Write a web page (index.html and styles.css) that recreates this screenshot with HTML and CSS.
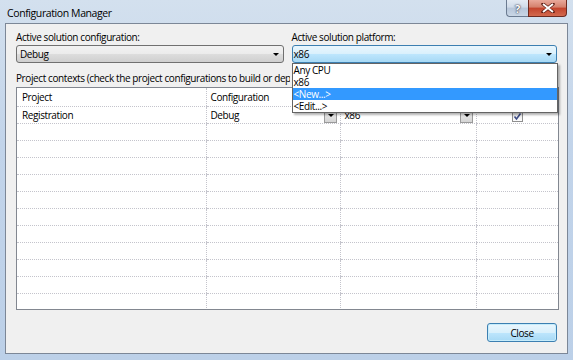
FILE: index.html
```html
<!DOCTYPE html>
<html>
<head>
<meta charset="utf-8">
<title>Configuration Manager</title>
<link rel="stylesheet" href="styles.css">
</head>
<body>
<div class="window">
  <div class="titlebar">
    <span class="title">Configuration Manager</span>
    <div class="caption">
      <span class="cap-help">?</span>
      <span class="cap-close">
        <svg width="14" height="10" viewBox="0 0 14 10"><path d="M2 1 L12 9 M12 1 L2 9" stroke="#5a1b12" stroke-width="3.4" stroke-linecap="round"/><path d="M2 1 L12 9 M12 1 L2 9" stroke="#fff" stroke-width="2"/></svg>
      </span>
    </div>
  </div>

  <div class="client">
    <div class="selectors">
      <div class="field cfg">
        <div class="label">Active solution configuration:</div>
        <div class="combo">Debug<span class="arrow"></span></div>
      </div>
      <div class="field plat">
        <div class="label">Active solution platform:</div>
        <div class="combo focused">x86<span class="arrow"></span></div>
        <ul class="dropdown">
          <li>Any CPU</li>
          <li>x86</li>
          <li class="sel">&lt;New...&gt;</li>
          <li>&lt;Edit...&gt;</li>
        </ul>
      </div>
    </div>

    <div class="label ctx">Project contexts (check the project configurations to build or deploy):</div>

    <div class="grid">
      <table>
        <colgroup><col class="c1"><col class="c2"><col class="c3"><col class="c4"></colgroup>
        <tr class="head"><td>Project</td><td>Configuration</td><td></td><td></td></tr>
        <tr>
          <td>Registration</td>
          <td><div class="cell">Debug<span class="mini"><span class="arrow"></span></span></div></td>
          <td><div class="cell">x86<span class="mini"><span class="arrow"></span></span></div></td>
          <td class="chk"><span class="box"><svg width="9" height="9" viewBox="0 0 9 9"><path d="M1.5 4.5 L3.5 7 L7.5 1.5" fill="none" stroke="#3d4c86" stroke-width="1.6"/></svg></span></td>
        </tr>
        <tr><td></td><td></td><td></td><td></td></tr>
        <tr><td></td><td></td><td></td><td></td></tr>
        <tr><td></td><td></td><td></td><td></td></tr>
        <tr><td></td><td></td><td></td><td></td></tr>
        <tr><td></td><td></td><td></td><td></td></tr>
        <tr><td></td><td></td><td></td><td></td></tr>
        <tr><td></td><td></td><td></td><td></td></tr>
        <tr><td></td><td></td><td></td><td></td></tr>
        <tr><td></td><td></td><td></td><td></td></tr>
        <tr><td></td><td></td><td></td><td></td></tr>
        <tr><td></td><td></td><td></td><td></td></tr>
      </table>
    </div>

    <div class="footer">
      <button class="btn-close">Close</button>
    </div>
  </div>
</div>
</body>
</html>
```

FILE: styles.css
```css
html, body {
  margin: 0;
  padding: 0;
  background: #c3d4e9;
  font-family: "Open Sans", "Noto Sans", sans-serif;
  font-size: 10px;
  letter-spacing: -0.4px;
  color: #000;
}
.window {
  width: 573px;
  height: 360px;
  box-sizing: border-box;
  padding: 0 5px 6px 5px;
  display: flex;
  flex-direction: column;
  background: linear-gradient(180deg, #d3e0ee 0%, #c2d4ea 40%, #bcd0e8 100%);
}
.titlebar {
  height: 23px;
  display: flex;
  align-items: flex-start;
  flex: none;
}
.title {
  padding: 6px 0 0 2px;
  line-height: 14px;
  font-size: 10.5px;
}
.caption {
  margin-left: auto;
  margin-right: 1px;
  display: flex;
}
.cap-help, .cap-close {
  height: 16px;
  border: 1px solid #6b7b91;
  border-top: none;
  display: flex;
  align-items: center;
  justify-content: center;
}
.cap-help {
  width: 21px;
  border-right: none;
  border-radius: 0 0 0 4px;
  background: linear-gradient(180deg, #e4ebf4 0%, #d0dbe9 45%, #b7c6da 50%, #c9d6e6 100%);
  color: #fff;
  font-weight: bold;
  font-size: 11px;
  text-shadow: 0 0 2px #334, 0 0 1px #223;
}
.cap-close {
  width: 37px;
  border-color: #6d2a20;
  border-radius: 0 0 4px 0;
  background: linear-gradient(180deg, #e9a99b 0%, #d4806c 45%, #c3432c 50%, #d2694e 100%);
}

.client {
  flex: 1;
  border: 1px solid #7c8797;
  background: #f0f0f0;
  padding: 6px 10px 10px 10px;
  display: flex;
  flex-direction: column;
}
.label {
  line-height: 14px;
  white-space: nowrap;
}
.selectors {
  display: flex;
  gap: 8px;
}
.field {
  position: relative;
}
.cfg { width: 268px; }
.plat { width: 266px; }
.combo {
  position: relative;
  margin-top: 1px;
  height: 16px;
  line-height: 16px;
  padding-left: 3px;
  border: 1px solid #707070;
  border-radius: 3px;
  background: linear-gradient(180deg, #f2f2f2 0%, #ebebeb 50%, #dddddd 50%, #cfcfcf 100%);
}
.combo.focused {
  padding-left: 1px;
  border-color: #3c7fb1;
  background: linear-gradient(180deg, #eaf6fd 0%, #d9f0fc 50%, #bee6fd 50%, #a7d9f5 100%);
}
.arrow {
  position: absolute;
  right: 4px;
  top: 7px;
  width: 0;
  height: 0;
  border-left: 3px solid transparent;
  border-right: 3px solid transparent;
  border-top: 3px solid #000;
}
.dropdown {
  position: absolute;
  left: 0;
  top: 33px;
  width: 264px;
  margin: 0;
  padding: 0;
  list-style: none;
  background: #fff;
  border: 1px solid #646464;
  box-shadow: 2px 2px 2px rgba(0, 0, 0, 0.3);
  z-index: 2;
}
.dropdown li {
  height: 12px;
  line-height: 12px;
  padding-left: 1px;
}
.dropdown li.sel {
  background: #3399ff;
  color: #fff;
}
.ctx {
  margin-top: 8px;
  width: 274px;
  overflow: hidden;
}

.grid {
  margin-top: 2px;
  width: 543px;
  height: 223px;
  box-sizing: border-box;
  border: 1px solid #828790;
  background: #fff;
  overflow: hidden;
}
.grid table {
  border-collapse: collapse;
  table-layout: fixed;
  width: 541px;
}
.c1 { width: 189px; }
.c2 { width: 134px; }
.c3 { width: 136px; }
.c4 { width: 82px; }
.grid td {
  height: 16px;
  padding: 0 0 0 4px;
  border-bottom: 1px dotted #c4c4cc;
  border-left: 1px dotted #c4c4cc;
  white-space: nowrap;
  overflow: hidden;
  line-height: 16px;
}
.grid td:first-child {
  border-left: none;
  padding-left: 5px;
}
.grid tr.head td {
  height: 18px;
}
.cell {
  position: relative;
}
.mini {
  position: absolute;
  right: 3px;
  top: 1px;
  width: 11px;
  height: 13px;
  border: 1px solid #9a9a9a;
  background: linear-gradient(180deg, #f2f2f2 0%, #e4e4e4 50%, #d4d4d4 100%);
}
.mini .arrow {
  right: 2px;
  top: 5px;
}
.grid td.chk {
  padding: 0;
  text-align: center;
}
.box {
  display: inline-block;
  width: 11px;
  height: 11px;
  box-sizing: border-box;
  border: 1px solid #8f8f8f;
  background: linear-gradient(180deg, #e2e2e2, #fdfdfd);
  vertical-align: middle;
  line-height: 0;
}

.footer {
  display: flex;
  justify-content: flex-end;
  padding-top: 13px;
}
.btn-close {
  width: 70px;
  height: 19px;
  padding: 0;
  font-family: inherit;
  font-size: 10px;
  letter-spacing: inherit;
  border: 1px solid #3c7fb1;
  border-radius: 3px;
  background: linear-gradient(180deg, #eaf6fd 0%, #d9f0fc 50%, #bee6fd 50%, #a7d9f5 100%);
  box-shadow: inset 0 0 0 1px #c6ecfb;
  color: #000;
}
```
